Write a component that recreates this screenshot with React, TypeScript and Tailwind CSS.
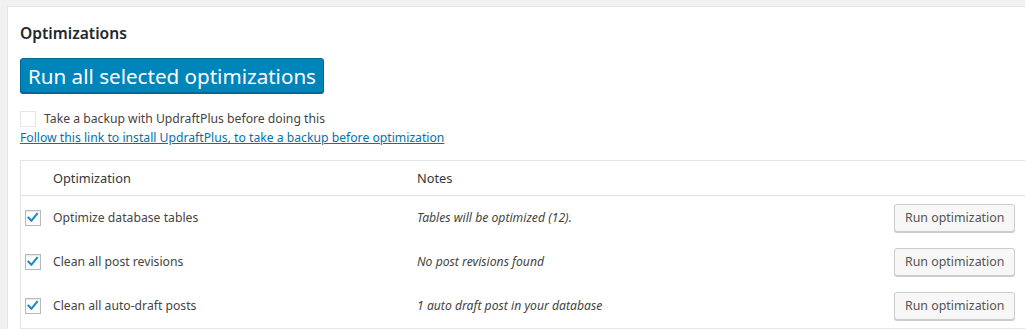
import React from "react";

const font = { fontFamily: '"Noto Sans", "Open Sans", sans-serif' };

function Check({ checked }: { checked: boolean }) {
  return (
    <span className="flex h-4 w-4 items-center justify-center border border-[#b4b9be] bg-white shadow-[inset_0_1px_2px_rgba(0,0,0,0.1)]">
      {checked && (
        <svg viewBox="0 0 16 16" className="h-[14px] w-[14px]">
          <path d="M2.8 7.6 L6.2 11 L12.6 3.4" fill="none" stroke="#1e8cbe" strokeWidth="2.4" strokeLinecap="square" />
        </svg>
      )}
    </span>
  );
}

const rows = [
  { name: "Optimize database tables", note: "Tables will be optimized (12)." },
  { name: "Clean all post revisions", note: "No post revisions found" },
  { name: "Clean all auto-draft posts", note: "1 auto draft post in your database" },
];

export default function App() {
  return (
    <div className="h-[329px] w-[1025px] overflow-hidden bg-[#f1f1f1] pl-[7px] pt-[6px] text-[12.2px] text-[#444]" style={font}>
      <div className="h-[400px] w-[1100px] border border-[#e5e5e5] bg-white pl-[12px] pt-[14px]">
        <h3 className="text-[15.6px] font-semibold leading-[24px] text-[#23282d]">Optimizations</h3>
        <button className="mt-[13px] h-[35px] rounded-[3px] border border-[#006799] bg-[#0085ba] px-[7px] text-[20.6px] leading-[30px] text-white shadow-[0_1px_0_#006799]">
          Run all selected optimizations
        </button>
        <div className="mt-[17px] flex items-center gap-[8px]">
          <span className="h-4 w-4 border border-[#e6e6e6] bg-white" />
          <span>Take a backup with UpdraftPlus before doing this</span>
        </div>
        <a className="block leading-[19px] text-[#0073aa] underline">
          Follow this link to install UpdraftPlus, to take a backup before optimization
        </a>
        <div className="mt-[13px] border border-[#e5e5e5]">
          <div className="flex h-[35px] items-center border-b border-[#e1e1e1] text-[12.8px] text-[#32373c]">
            <span className="w-[396px] pl-[32px]">Optimization</span>
            <span>Notes</span>
          </div>
          {rows.map((r) => (
            <div key={r.name} className="flex h-[44px] items-center">
              <span className="w-[32px] pl-[4px]">
                <Check checked />
              </span>
              <span className="w-[364px]">{r.name}</span>
              <span className="w-[477px] italic">{r.note}</span>
              <button className="h-[28px] rounded-[3px] border border-[#ccc] bg-[#f7f7f7] px-[10px] text-[12.4px] text-[#555] shadow-[0_1px_0_#ccc]">
                Run optimization
              </button>
            </div>
          ))}
        </div>
      </div>
    </div>
  );
}
